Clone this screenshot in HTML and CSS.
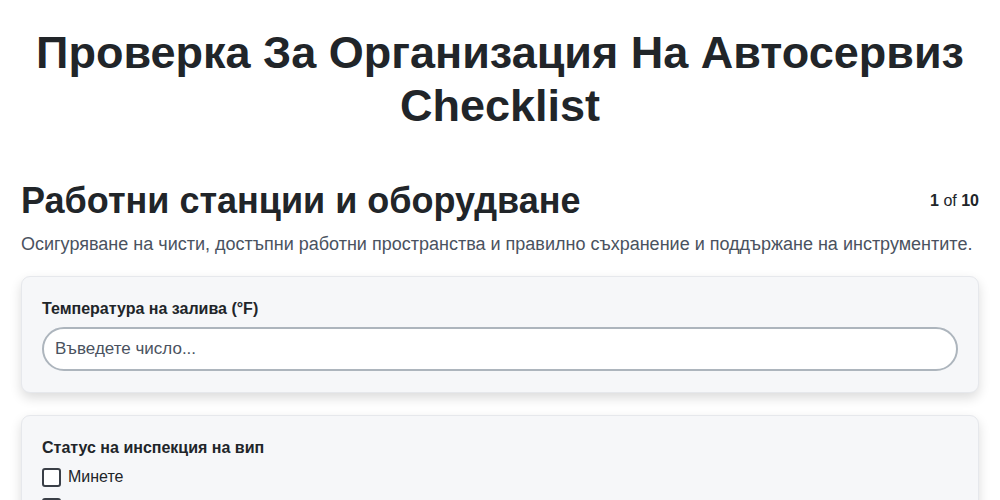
FILE: index.html
```html
<!DOCTYPE html>
<html lang="bg">
<head>
<meta charset="utf-8">
<title>Проверка За Организация На Автосервиз Checklist</title>
<link rel="stylesheet" href="styles.css">
</head>
<body>
<div class="page">
  <h1 class="title">Проверка За Организация На Автосервиз Checklist</h1>
  <section class="section">
    <div class="section-head">
      <h2 class="section-title">Работни станции и оборудване</h2>
      <div class="progress"><b>1</b> of <b>10</b></div>
    </div>
    <p class="section-desc">Осигуряване на чисти, достъпни работни пространства и правилно съхранение и поддържане на инструментите.</p>

    <div class="card">
      <label class="field-label" for="temp">Температура на залива (°F)</label>
      <input class="text-input" id="temp" type="text" placeholder="Въведете число...">
    </div>

    <div class="card">
      <div class="field-label">Статус на инспекция на вип</div>
      <label class="check"><span class="box"></span>Минете</label>
      <label class="check"><span class="box"></span>Внимание</label>
    </div>
  </section>
</div>
</body>
</html>
```
FILE: styles.css
```css
* { box-sizing: border-box; }

html, body {
  margin: 0;
  background: #ffffff;
  font-family: "Liberation Sans", Arial, sans-serif;
  color: #212529;
}

.page {
  padding: 0 21px;
}

.title {
  margin: 0;
  padding-top: 26px;
  font-size: 45px;
  line-height: 53px;
  font-weight: 700;
  text-align: center;
}

.section {
  margin-top: 47px;
}

.section-head {
  display: flex;
  justify-content: space-between;
  align-items: center;
}

.section-title {
  margin: 0;
  font-size: 36px;
  line-height: 44px;
  font-weight: 700;
}

.progress {
  font-size: 16px;
  color: #212529;
}

.section-desc {
  margin: 8px 0 19px;
  font-size: 18px;
  line-height: 26px;
  color: #4a5260;
}

.card {
  background: #f6f7f9;
  border: 1px solid #e6e8ec;
  border-radius: 9px;
  padding: 21px 20px 21px;
  margin-bottom: 22px;
  box-shadow: 0 5px 12px rgba(0, 0, 0, 0.14);
}

.field-label {
  display: block;
  font-size: 16px;
  line-height: 22px;
  font-weight: 700;
  margin-bottom: 7px;
}

.text-input {
  display: block;
  width: 100%;
  height: 44px;
  border: 2px solid #adb5bd;
  border-radius: 22px;
  background: #ffffff;
  padding: 0 11px;
  font-family: inherit;
  font-size: 17px;
  color: #212529;
}

.text-input::placeholder {
  color: #4a5260;
}

.check {
  display: flex;
  align-items: center;
  gap: 7px;
  font-size: 16px;
  line-height: 22px;
  margin-bottom: 8px;
}

.box {
  width: 19px;
  height: 19px;
  border: 2px solid #3a3f47;
  border-radius: 3px;
  background: #ffffff;
}
```
